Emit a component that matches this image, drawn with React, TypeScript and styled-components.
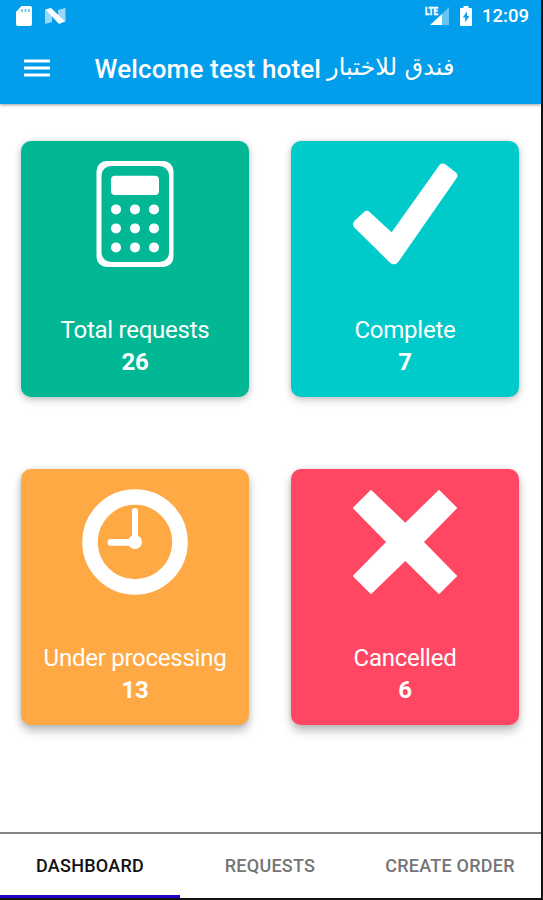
import React from 'react';
import styled, { createGlobalStyle } from 'styled-components';

const GlobalStyle = createGlobalStyle`
  *, *::before, *::after { box-sizing: border-box; }
  body { margin: 0; background: #000; font-family: Roboto, 'Noto Sans', sans-serif; }
`;

const Screen = styled.div`
  display: flex;
  flex-direction: column;
  width: 543px;
  height: 900px;
  background: #fff;
  border-right: 2px solid #111;
  overflow: hidden;
`;

const Header = styled.header`
  display: flex;
  flex-direction: column;
  flex: none;
  height: 104px;
  background: #039eeb;
  color: #fff;
  box-shadow: 0 1px 3px rgba(0, 0, 0, 0.4);
`;

const StatusBar = styled.div`
  display: flex;
  align-items: center;
  justify-content: space-between;
  height: 31px;
  padding: 0 12px 0 16px;
`;

const StatusGroup = styled.div<{ $gap: number }>`
  display: flex;
  align-items: center;
  gap: ${(p) => p.$gap}px;
`;

const Clock = styled.span`
  font-size: 18.5px;
  font-weight: 500;
  line-height: 31px;
  padding-top: 2px;
`;

const Toolbar = styled.div`
  display: flex;
  align-items: center;
  height: 73px;
  padding-left: 24px;
`;

const MenuButton = styled.button`
  display: flex;
  width: 26px;
  padding: 0;
  border: 0;
  background: none;
  color: inherit;
  margin-right: 44.5px;
`;

const Title = styled.h1`
  display: flex;
  align-items: center;
  gap: 6px;
  margin: 0;
  padding-top: 2px;
  font-size: 26px;
  line-height: 40px;
  font-weight: 500;
  white-space: nowrap;
`;

const TitleLatin = styled.span`
  display: block;
  letter-spacing: 0.15px;
`;

const TitleArabic = styled.span`
  display: block;
  font-family: 'DejaVu Sans', sans-serif;
  font-size: 24px;
  font-weight: 400;
  line-height: 36px;
  padding-bottom: 4px;
`;

const Grid = styled.main`
  display: grid;
  grid-template-columns: 228px 228px;
  grid-auto-rows: 256.5px;
  column-gap: 42px;
  row-gap: 71.5px;
  flex: 1;
  padding: 36.5px 0 0 21px;
`;

const Card = styled.section<{ $color: string; $raised?: boolean }>`
  display: flex;
  flex-direction: column;
  align-items: center;
  padding-top: 20.5px;
  border-radius: 10px;
  background: ${(p) => p.$color};
  color: #fff;
  box-shadow: ${(p) =>
    p.$raised ? '0 6px 10px rgba(0,0,0,.25), 0 0 5px rgba(0,0,0,.12)' : '0 3px 8px rgba(0,0,0,.22), 0 0 4px rgba(0,0,0,.1)'};
`;

const CardLabel = styled.div`
  margin-top: 47px;
  font-size: 24px;
  line-height: 32px;
  letter-spacing: -0.25px;
  white-space: nowrap;
`;

const CardValue = styled.div`
  font-size: 24px;
  line-height: 32px;
  font-weight: 700;
  letter-spacing: -0.2px;
`;

const Tabs = styled.nav`
  display: grid;
  grid-template-columns: repeat(3, 180px);
  flex: none;
  height: 68px;
  border-top: 2px solid #858585;
  border-bottom: 2px solid #111;
`;

const Tab = styled.button<{ $active?: boolean }>`
  padding: 3px 0 0;
  border: 0;
  border-bottom: 3px solid ${(p) => (p.$active ? '#2005c9' : 'transparent')};
  background: none;
  font: 500 18px/24px Roboto, sans-serif;
  letter-spacing: 0.25px;
  color: ${(p) => (p.$active ? '#111' : '#757575')};
  white-space: nowrap;
`;

const CalculatorIcon = () => (
  <svg width="106" height="106" viewBox="0 0 106 106" fill="#fff">
    <path
      fillRule="evenodd"
      d="M24.5 0H81.500a10 10 0 0 1 10 10V96a10 10 0 0 1-10 10H24.500a10 10 0 0 1-10-10V10a10 10 0 0 1 10-10ZM29 5a9.500 9.500 0 0 0-9.500 9.500v77a9.500 9.500 0 0 0 9.500 9.500h48.500a9.500 9.500 0 0 0 9.500-9.500v-77a9.500 9.500 0 0 0-9.500-9.500Z"
    />
    <rect x="29" y="14.700" width="48" height="19.300" rx="4" />
    {[48.4, 67.4, 86.4].map((y) => [34, 53, 72].map((x) => <circle key={`${x}-${y}`} cx={x} cy={y} r="5" />))}
  </svg>
);

const CheckIcon = () => (
  <svg width="106" height="106" viewBox="0 0 106 106" fill="#fff" stroke="#fff" strokeWidth="9" strokeLinejoin="round">
    <path d="M5.500 63.300 14.800 54.500 40.300 78 90.800 7 100.800 14.800 42.300 98.800 41.500 98.800Z" />
  </svg>
);

const ClockIcon = () => (
  <svg width="106" height="106" viewBox="0 0 106 106" fill="none" stroke="#fff" strokeLinecap="round">
    <circle cx="53" cy="53" r="45" strokeWidth="15.500" />
    <path d="M53 22V53" strokeWidth="6" />
    <path d="M29 53.400H53" strokeWidth="6.800" />
    <circle cx="53" cy="53" r="7" fill="#fff" stroke="none" />
  </svg>
);

const CrossIcon = () => (
  <svg width="106" height="106" viewBox="0 0 106 106" fill="#fff">
    <path d="M19 .7 53.300 33.700 87 .7 105.300 19 72 53 105.300 87 87 105.300 53.300 72 19 105.300 .7 87 34 53 .7 19Z" />
  </svg>
);

const SdCardIcon = () => (
  <svg width="16" height="20" viewBox="0 0 16 20">
    <path fill="#fff" d="M5.500 0H14a2 2 0 0 1 2 2v16a2 2 0 0 1-2 2H2a2 2 0 0 1-2-2V6Z" />
    <path stroke="#7fc8f2" strokeWidth="2" d="M6 3v3M9.500 3v3M13 3v3" />
  </svg>
);

const NougatIcon = () => (
  <svg width="21" height="16" viewBox="0 0 21 16" fill="#fff">
    <path opacity=".6" d="M0 1.500 7 3v11l-7 2ZM13 2l7.500-2v13.500L13 15Z" />
    <path d="M.5 1.500 6 0 20 13.500 14 16Z" />
  </svg>
);

const SignalIcon = () => (
  <svg width="25" height="20" viewBox="0 0 25 20" fill="#fff">
    <path opacity=".4" d="M24 1V19H17V8Z" />
    <path d="M5 19 17 8V19Z" />
    <text
      x="0"
      y="8.500"
      fontFamily="Roboto, sans-serif"
      fontSize="10.500"
      fontWeight="700"
      textLength="13"
      lengthAdjust="spacingAndGlyphs"
      stroke="#fff"
      strokeWidth=".4"
    >
      LTE
    </text>
  </svg>
);

const BatteryIcon = () => (
  <svg width="12" height="20" viewBox="0 0 12 20">
    <path fill="#fff" d="M3.500 0h5v2H11a1 1 0 0 1 1 1v16a1 1 0 0 1-1 1H1a1 1 0 0 1-1-1V3a1 1 0 0 1 1-1h2.500Z" />
    <path fill="#039eeb" d="M7 5.500 2.800 11.500H5.300V16.500L9.300 10H7Z" />
  </svg>
);

const MenuIcon = () => (
  <svg width="26" height="20" viewBox="0 0 26 20" stroke="#fff" strokeWidth="3">
    <path d="M0 3H26M0 10H26M0 17H26" />
  </svg>
);

const cards = [
  { label: 'Total requests', value: 26, color: '#02b894', icon: <CalculatorIcon /> },
  { label: 'Complete', value: 7, color: '#01cacb', icon: <CheckIcon /> },
  { label: 'Under processing', value: 13, color: '#ffa944', icon: <ClockIcon />, raised: true },
  { label: 'Cancelled', value: 6, color: '#ff4662', icon: <CrossIcon />, raised: true },
];

export default function App() {
  return (
    <>
      <GlobalStyle />
      <Screen>
        <Header>
          <StatusBar>
            <StatusGroup $gap={13}>
              <SdCardIcon />
              <NougatIcon />
            </StatusGroup>
            <StatusGroup $gap={10}>
              <SignalIcon />
              <BatteryIcon />
              <Clock>12:09</Clock>
            </StatusGroup>
          </StatusBar>
          <Toolbar>
            <MenuButton aria-label="Menu">
              <MenuIcon />
            </MenuButton>
            <Title>
              <TitleLatin>Welcome test hotel</TitleLatin>
              <TitleArabic dir="rtl" lang="ar">فندق للاختبار</TitleArabic>
            </Title>
          </Toolbar>
        </Header>
        <Grid>
          {cards.map((c) => (
            <Card key={c.label} $color={c.color} $raised={c.raised}>
              {c.icon}
              <CardLabel>{c.label}</CardLabel>
              <CardValue>{c.value}</CardValue>
            </Card>
          ))}
        </Grid>
        <Tabs>
          <Tab $active>DASHBOARD</Tab>
          <Tab>REQUESTS</Tab>
          <Tab>CREATE ORDER</Tab>
        </Tabs>
      </Screen>
    </>
  );
}
